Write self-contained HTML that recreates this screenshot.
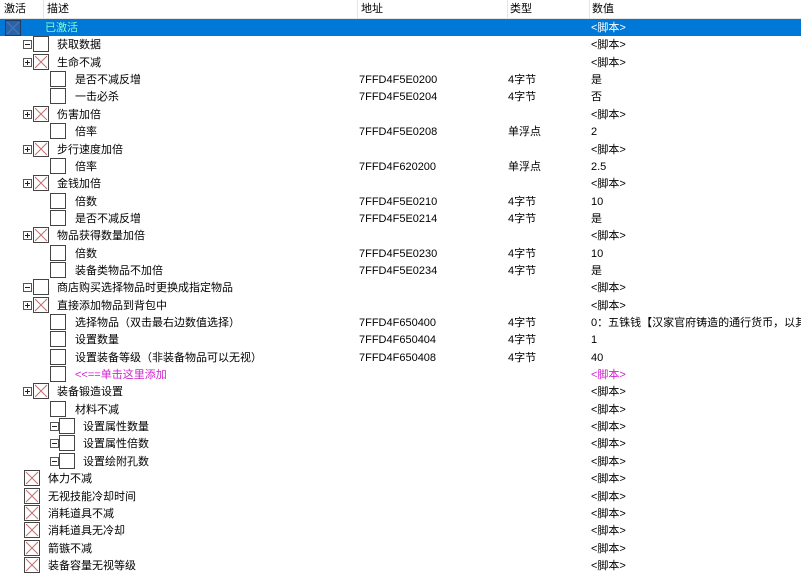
<!DOCTYPE html><html><head><meta charset="utf-8"><style>
body{margin:0;width:801px;height:569px;overflow:hidden;background:#fff;font-family:"Liberation Sans","Noto Sans CJK SC",sans-serif;font-size:11px;color:#000;position:relative}
.h{position:absolute;top:0;left:0;width:801px;height:18px;border-bottom:1px solid #e5e5e5}
.h span{position:absolute;top:2px;line-height:15px}
.sep{position:absolute;top:0;width:1px;height:18px;background:#e5e5e5}
.r{position:absolute;left:0;width:801px;height:17px}
.r span,.r i,.r b{position:absolute}
.t{top:2px;line-height:15px;height:15px;white-space:nowrap;overflow:hidden}
.cb{top:0;width:14px;height:14px;border:1px solid #444;background:#fff}
.cb svg{position:absolute;left:0;top:0}
.ex{top:4px;width:7px;height:7px;border:1px solid #555;font-size:0}
.ex:before{content:"";position:absolute;left:1px;top:3px;width:5px;height:1px;background:#222}
.ex.p:after{content:"";position:absolute;left:3px;top:1px;width:1px;height:5px;background:#222}
.sel{background:#0078d7;color:#fff}
.m{color:#d020d0}
</style></head><body>
<div class="h"><span style="left:4px">激活</span><span style="left:47px">描述</span><span style="left:361px">地址</span><span style="left:510px">类型</span><span style="left:592px">数值</span>
<div class="sep" style="left:43px"></div><div class="sep" style="left:357px"></div><div class="sep" style="left:507px"></div><div class="sep" style="left:589px"></div></div>
<div id="rows"></div>
<script>
var X='<svg width="14" height="14"><path d="M1 1L13 13M13 1L1 13" stroke="#c07070" stroke-width="1"/></svg>';
var rows=[
[1,'已激活','','','<脚本>'],
['e-',0,'获取数据','','','<脚本>'],
['e+',1,'生命不减','','','<脚本>'],
['c',0,'是否不减反增','7FFD4F5E0200','4字节','是'],
['c',0,'一击必杀','7FFD4F5E0204','4字节','否'],
['e+',1,'伤害加倍','','','<脚本>'],
['c',0,'倍率','7FFD4F5E0208','单浮点','2'],
['e+',1,'步行速度加倍','','','<脚本>'],
['c',0,'倍率','7FFD4F620200','单浮点','2.5'],
['e+',1,'金钱加倍','','','<脚本>'],
['c',0,'倍数','7FFD4F5E0210','4字节','10'],
['c',0,'是否不减反增','7FFD4F5E0214','4字节','是'],
['e+',1,'物品获得数量加倍','','','<脚本>'],
['c',0,'倍数','7FFD4F5E0230','4字节','10'],
['c',0,'装备类物品不加倍','7FFD4F5E0234','4字节','是'],
['e-',0,'商店购买选择物品时更换成指定物品','','','<脚本>'],
['e+',1,'直接添加物品到背包中','','','<脚本>'],
['c',0,'选择物品（双击最右边数值选择）','7FFD4F650400','4字节','0：五铢钱【汉家官府铸造的通行货币，以其」'],
['c',0,'设置数量','7FFD4F650404','4字节','1'],
['c',0,'设置装备等级（非装备物品可以无视）','7FFD4F650408','4字节','40'],
['m',0,'<<==单击这里添加','','','<脚本>'],
['e+',1,'装备锻造设置','','','<脚本>'],
['c',0,'材料不减','','','<脚本>'],
['s',0,'设置属性数量','','','<脚本>'],
['s',0,'设置属性倍数','','','<脚本>'],
['s',0,'设置绘附孔数','','','<脚本>'],
['z',1,'体力不减','','','<脚本>'],
['z',1,'无视技能冷却时间','','','<脚本>'],
['z',1,'消耗道具不减','','','<脚本>'],
['z',1,'消耗道具无冷却','','','<脚本>'],
['z',1,'箭镞不减','','','<脚本>'],
['z',1,'装备容量无视等级','','','<脚本>']];
function esc(s){return s.replace(/</g,'&lt;').replace(/>/g,'&gt;')}
var h='';
rows.forEach(function(r,i){
 var top=(19+i*17.35).toFixed(1);
 if(i==0){h+='<div class="r sel" style="top:'+top+'px"><span class="cb" style="left:5px;top:1px;background:#2a62a8;border-color:#1d3d66"><svg width="14" height="14"><path d="M1 1L13 13M13 1L1 13" stroke="#4a7ab8"/></svg></span><span class="t" style="left:45px;color:#7fffd0">已激活</span><span class="t" style="left:591px">&lt;脚本&gt;</span></div>';return;}
 var k=r[0],x=r[1]?X:'',cbx,tx,ex=-1;
 if(k=='e-'||k=='e+'){ex=23;cbx=33;tx=57}
 else if(k=='c'||k=='m'){cbx=50;tx=75}
 else if(k=='s'){ex=50;cbx=59;tx=83}
 else {cbx=24;tx=48}
 h+='<div class="r'+(k=='m'?' m':'')+'" style="top:'+top+'px">';
 if(ex>=0)h+='<i class="ex'+(k=='e+'?' p':'')+'" style="left:'+ex+'px"></i>';
 h+='<span class="cb" style="left:'+cbx+'px">'+x+'</span>';
 h+='<span class="t" style="left:'+tx+'px">'+esc(r[2])+'</span>';
 h+='<span class="t" style="left:359px">'+r[3]+'</span><span class="t" style="left:508px">'+r[4]+'</span><span class="t" style="left:591px;width:210px">'+esc(r[5])+'</span></div>';
});
document.getElementById('rows').innerHTML=h;
</script>
</body></html>
